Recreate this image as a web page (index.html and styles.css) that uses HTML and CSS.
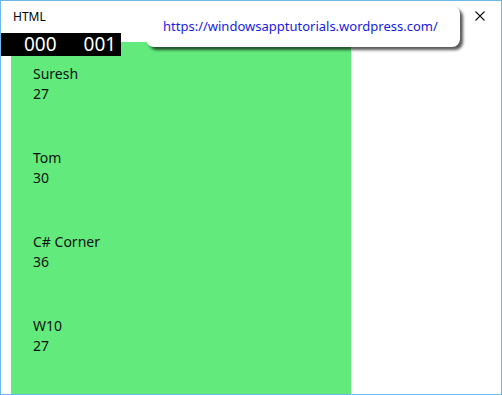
FILE: index.html
```html
<!DOCTYPE html>
<html>
  <head>
    <meta charset="UTF-8" />
    <title>HTML</title>
    <link rel="stylesheet" href="styles.css">
  </head>
  <body>
    <div class="window">
      <div class="titlebar">
        <span class="title">HTML</span>
        <svg class="close" width="10" height="10" viewBox="0 0 10 10">
          <path d="M0.5 0.5 L9.5 9.5 M9.5 0.5 L0.5 9.5" stroke="#111111" stroke-width="1.1" fill="none" />
        </svg>
      </div>
      <div class="content">
        <div class="fps">
          <span>000</span>
          <span>001</span>
        </div>
        <div class="list">
          <div class="item">
            <div>Suresh</div>
            <div>27</div>
          </div>
          <div class="item">
            <div>Tom</div>
            <div>30</div>
          </div>
          <div class="item">
            <div>C# Corner</div>
            <div>36</div>
          </div>
          <div class="item">
            <div>W10</div>
            <div>27</div>
          </div>
        </div>
        <div class="tooltip">https://windowsapptutorials.wordpress.com/</div>
      </div>
    </div>
  </body>
</html>
```

FILE: styles.css
```css
html,
body {
  margin: 0;
  padding: 0;
}
body {
  font-family: "Noto Sans", "Open Sans", sans-serif;
  background-color: #ffffff;
}
.window {
  width: 502px;
  height: 395px;
  box-sizing: border-box;
  border: 1px solid #6cb8ea;
  display: flex;
  flex-direction: column;
  overflow: hidden;
}
.titlebar {
  height: 31px;
  display: flex;
  align-items: center;
  justify-content: space-between;
  padding: 0 16px 0 12px;
  flex-shrink: 0;
}
.title {
  font-size: 12px;
  color: #000000;
}
.close {
  display: block;
  margin-top: -2px;
}
.content {
  position: relative;
  flex: 1;
  padding: 10px 0 0 10px;
}
.list {
  width: 340px;
  height: 100%;
  background-color: #62eb7c;
  padding: 22px 0 0 22px;
  box-sizing: border-box;
}
.item {
  font-size: 14px;
  line-height: 20px;
  color: #111111;
  margin-bottom: 44px;
}
.fps {
  position: absolute;
  left: 0;
  top: 1px;
  width: 120px;
  height: 23px;
  background-color: #000000;
  color: #ffffff;
  font-size: 19px;
  line-height: 23px;
  display: flex;
  gap: 27px;
  padding-left: 23px;
  box-sizing: border-box;
}
.tooltip {
  position: absolute;
  left: 145px;
  top: -26px;
  width: 314px;
  height: 41px;
  box-sizing: border-box;
  background-color: #ffffff;
  border-radius: 8px;
  box-shadow: 3px 3px 3px rgba(0, 0, 0, 0.65);
  padding-left: 17px;
  font-size: 13px;
  line-height: 41px;
  color: #1a1ae0;
}
```
